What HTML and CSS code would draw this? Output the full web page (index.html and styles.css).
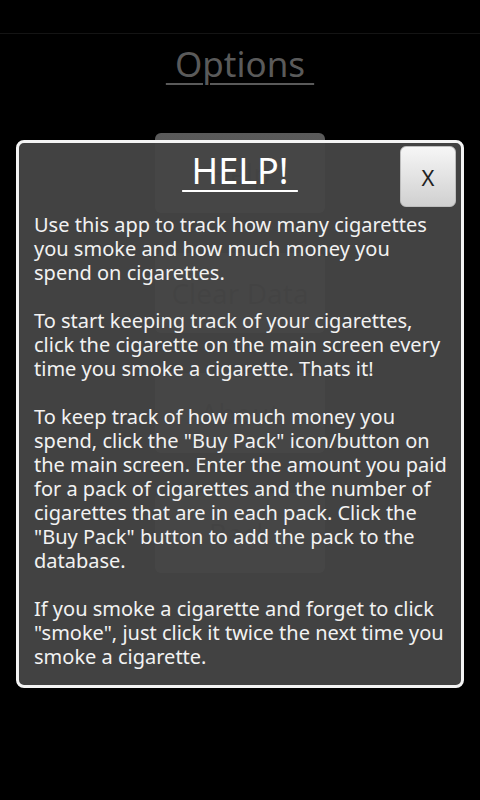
FILE: index.html
```html
<!DOCTYPE html>
<html>
<head>
<meta charset="utf-8">
<link rel="stylesheet" href="styles.css">
</head>
<body>
<div class="screen">
  <div class="statusline"></div>
  <h1 class="title">&nbsp;Options&nbsp;</h1>
  <div class="menu">
    <div class="menu-btn">Help</div>
    <div class="menu-btn">Clear Data</div>
    <div class="menu-btn">About</div>
    <div class="menu-btn">Back</div>
  </div>

  <div class="dialog">
    <div class="dialog-head">
      <h2 class="dialog-title">&nbsp;HELP!&nbsp;</h2>
      <div class="close-btn">X</div>
    </div>
    <div class="dialog-body">
      <p>Use this app to track how many cigarettes you smoke and how much money you spend on cigarettes.</p>
      <p>To start keeping track of your cigarettes, click the cigarette on the main screen every time you smoke a cigarette. Thats it!</p>
      <p>To keep track of how much money you spend, click the "Buy Pack" icon/button on the main screen. Enter the amount you paid for a pack of cigarettes and the number of cigarettes that are in each pack. Click the "Buy Pack" button to add the pack to the database.</p>
      <p>If you smoke a cigarette and forget to click "smoke", just click it twice the next time you smoke a cigarette.</p>
    </div>
  </div>
</div>
</body>
</html>
```

FILE: styles.css
```css
html, body {
  margin: 0;
  padding: 0;
  background: #000;
}
body {
  font-family: "Noto Sans", "Open Sans", sans-serif;
}
.screen {
  position: relative;
  width: 480px;
  height: 800px;
  overflow: hidden;
  background: #000;
}
.statusline {
  height: 34px;
  border-bottom: 1px solid #141414;
  box-sizing: border-box;
}
.title {
  margin: 8px 0 0;
  text-align: center;
  font-weight: normal;
  font-size: 35px;
  line-height: 44px;
  color: #5a5a5a;
  text-decoration: underline;
  text-decoration-thickness: 2px;
  text-underline-offset: 6px;
}
.menu {
  display: flex;
  flex-direction: column;
  align-items: center;
  gap: 40px;
  margin-top: 47px;
}
.menu-btn {
  width: 170px;
  height: 80px;
  border-radius: 6px;
  background: linear-gradient(#5a5a5a, #545454);
  color: #1e1e1e;
  font-size: 28px;
  display: flex;
  align-items: center;
  justify-content: center;
}
.dialog {
  position: absolute;
  left: 16px;
  top: 140px;
  width: 448px;
  height: 548px;
  box-sizing: border-box;
  border: 3px solid #f4f4f4;
  border-radius: 8px;
  background: rgba(70, 70, 70, 0.95);
  display: flex;
  flex-direction: column;
  overflow: hidden;
}
.dialog-head {
  position: relative;
  display: flex;
  justify-content: center;
  height: 70px;
  flex-shrink: 0;
}
.dialog-title {
  margin: 6px 0 0;
  font-weight: normal;
  font-size: 36px;
  line-height: 44px;
  color: #fff;
  text-decoration: underline;
  text-decoration-thickness: 2px;
  text-underline-offset: 6px;
}
.close-btn {
  position: absolute;
  right: 5px;
  top: 3px;
  width: 56px;
  height: 61px;
  box-sizing: border-box;
  border-radius: 6px;
  background: linear-gradient(#f6f6f6, #d0d0d0);
  border: 1px solid #bdbdbd;
  color: #222;
  font-size: 22px;
  display: flex;
  align-items: center;
  justify-content: center;
}
.dialog-body {
  padding: 0 14px 0 15px;
  color: #f2f2f2;
  font-size: 20px;
  line-height: 24px;
}
.dialog-body p {
  margin: 0 0 24px;
}
```
